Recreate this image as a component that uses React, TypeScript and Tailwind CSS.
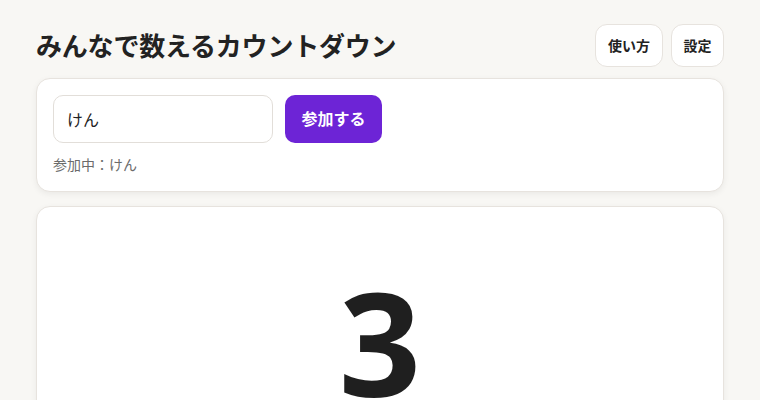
import React from "react";

export default function App() {
  const jp = { fontFamily: '"Noto Sans", "Noto Sans CJK JP", sans-serif' };
  return (
    <div className="min-h-[400px] bg-[#f8f7f4] text-[#1f1f1f]" style={jp}>
      <div className="mx-[36px] pt-[24px] flex flex-col">
        <div className="flex items-center justify-between">
          <h1 className="text-[26px] font-bold leading-none tracking-[-0.2px] text-[#222]">みんなで数えるカウントダウン</h1>
          <div className="flex gap-2">
            <button className="h-[43px] px-3 rounded-xl border border-[#e7e3de] bg-white text-[14px] font-bold text-[#222]">使い方</button>
            <button className="h-[43px] px-[11.5px] rounded-xl border border-[#e7e3de] bg-white text-[14px] font-bold text-[#222]">設定</button>
          </div>
        </div>
        <div className="mt-[11px] rounded-[14px] border border-[#e7e3de] bg-white p-4 shadow-[0_2px_6px_rgba(0,0,0,0.06)]">
          <div className="flex gap-3">
            <input
              defaultValue="けん"
              className="w-[220px] h-[48px] rounded-[10px] border border-[#e2ded9] px-[13px] text-[16px] text-[#222] outline-none"
              style={jp}
            />
            <button className="h-[48px] w-[97px] rounded-[10px] bg-[#6d24d6] text-white text-[16px] font-bold">参加する</button>
          </div>
          <div className="mt-3 text-[14px] leading-[20px] text-[#6b6b6b]">参加中：けん</div>
        </div>
        <div className="mt-[14px] rounded-[14px] border border-[#e7e3de] bg-white shadow-[0_2px_6px_rgba(0,0,0,0.06)] h-[300px] flex justify-center">
          <div className="mt-[62px] text-[144px] font-bold leading-none text-[#1f1f1f]" style={{ fontFamily: '"Open Sans", sans-serif' }}>3</div>
        </div>
      </div>
    </div>
  );
}
